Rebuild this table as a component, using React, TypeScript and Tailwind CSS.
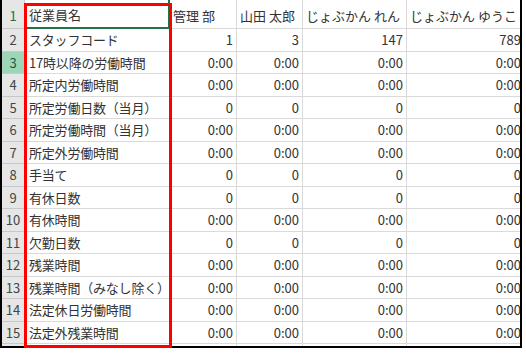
const headers = ["従業員名", "管理 部", "山田 太郎", "じょぶかん れん", "じょぶかん ゆうこ"];

const rows: [string, string[]][] = [
  ["スタッフコード", ["1", "3", "147", "789"]],
  ["17時以降の労働時間", ["0:00", "0:00", "0:00", "0:00"]],
  ["所定内労働時間", ["0:00", "0:00", "0:00", "0:00"]],
  ["所定労働日数（当月）", ["0", "0", "0", "0"]],
  ["所定労働時間（当月）", ["0:00", "0:00", "0:00", "0:00"]],
  ["所定外労働時間", ["0:00", "0:00", "0:00", "0:00"]],
  ["手当て", ["0", "0", "0", "0"]],
  ["有休日数", ["0", "0", "0", "0"]],
  ["有休時間", ["0:00", "0:00", "0:00", "0:00"]],
  ["欠勤日数", ["0", "0", "0", "0"]],
  ["残業時間", ["0:00", "0:00", "0:00", "0:00"]],
  ["残業時間（みなし除く）", ["0:00", "0:00", "0:00", "0:00"]],
  ["法定休日労働時間", ["0:00", "0:00", "0:00", "0:00"]],
  ["法定外残業時間", ["0:00", "0:00", "0:00", "0:00"]],
  ["", ["", "", "", ""]],
];

const cols = "grid grid-cols-[23px_145px_67px_66px_104px_118px]";

const App = () => {
  return (
    <div
      className="relative w-[526px] h-[353px] bg-white overflow-hidden text-[13px] text-[#333]"
      style={{ fontFamily: '"Noto Sans CJK JP", "Noto Sans", sans-serif' }}
    >
      <div className="w-[522px] h-[348px] border-l-2 border-r-2 border-b-2 border-black overflow-hidden">
        {/* header row */}
        <div className={`${cols} h-[29px]`}>
          <div className="flex items-end justify-center pb-[3px] bg-[#e6e6e6] border-r border-b border-[#c8c8c8] text-[#217346]">1</div>
          <div className="relative flex items-end pb-[3px] pl-[4px] border-b-2 border-r-2 border-b-[#217346] border-r-[#217346] whitespace-nowrap">
            {headers[0]}
          </div>
          {headers.slice(1).map((h, i) => (
            <div key={i} className="flex items-end pb-[3px] pl-[3px] border-r border-b border-[#dadada] whitespace-nowrap">
              {h}
            </div>
          ))}
        </div>

        {rows.map(([label, vals], r) => (
          <div key={r} className={`${cols} h-[22.5px]`}>
            <div
              className={`flex items-center justify-center border-r border-b border-[#c8c8c8] ${
                r === 1 ? "bg-[#9fd5b7] text-[#1d5c3c]" : "bg-[#e6e6e6] text-[#444]"
              }`}
            >
              {label ? r + 2 : ""}
            </div>
            <div className="flex items-center pl-[4px] border-r border-b border-[#dadada] whitespace-nowrap tracking-[-0.2px]">
              {label}
            </div>
            {vals.map((v, i) => (
              <div key={i} className="flex items-center justify-end pr-[3px] border-r border-b border-[#dadada] whitespace-nowrap">
                {v}
              </div>
            ))}
          </div>
        ))}
      </div>

      {/* red highlight frame */}
      <div className="absolute left-[24px] top-[3px] w-[148px] h-[345px] border-[3px] border-[#ff0000]" />
    </div>
  );
};

export default App;
